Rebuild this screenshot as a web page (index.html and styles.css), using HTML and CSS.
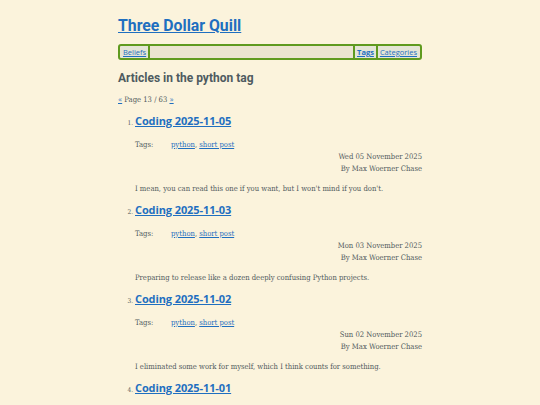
FILE: index.html
```html
<!DOCTYPE html>
<html>
<head>
<meta charset="utf-8">
<link rel="stylesheet" href="styles.css">
</head>
<body>
<div class="page">
  <header class="site-header">
    <h1 class="site-title"><a href="#">Three Dollar Quill</a></h1>
    <nav class="nav">
      <a class="nav-item" href="#">Beliefs</a>
      <span class="nav-spacer"></span>
      <a class="nav-item current" href="#">Tags</a>
      <a class="nav-item" href="#">Categories</a>
    </nav>
  </header>
  <main>
    <h2 class="section-title">Articles in the python tag</h2>
    <p class="pager"><a href="#">«</a> Page 13 / 63 <a href="#">»</a></p>
    <ol class="articles" start="1">
      <li class="article">
        <h3 class="article-title"><a href="#">Coding 2025-11-05</a></h3>
        <div class="tags"><span class="tags-label">Tags:</span><span><a href="#">python</a>, <a href="#">short post</a></span></div>
        <div class="meta"><div>Wed 05 November 2025</div><div>By Max Woerner Chase</div></div>
        <p class="summary">I mean, you can read this one if you want, but I won't mind if you don't.</p>
      </li>
      <li class="article">
        <h3 class="article-title"><a href="#">Coding 2025-11-03</a></h3>
        <div class="tags"><span class="tags-label">Tags:</span><span><a href="#">python</a>, <a href="#">short post</a></span></div>
        <div class="meta"><div>Mon 03 November 2025</div><div>By Max Woerner Chase</div></div>
        <p class="summary">Preparing to release like a dozen deeply confusing Python projects.</p>
      </li>
      <li class="article">
        <h3 class="article-title"><a href="#">Coding 2025-11-02</a></h3>
        <div class="tags"><span class="tags-label">Tags:</span><span><a href="#">python</a>, <a href="#">short post</a></span></div>
        <div class="meta"><div>Sun 02 November 2025</div><div>By Max Woerner Chase</div></div>
        <p class="summary">I eliminated some work for myself, which I think counts for something.</p>
      </li>
      <li class="article">
        <h3 class="article-title"><a href="#">Coding 2025-11-01</a></h3>
        <div class="tags"><span class="tags-label">Tags:</span><span><a href="#">python</a>, <a href="#">short post</a></span></div>
        <div class="meta"><div>Sat 01 November 2025</div><div>By Max Woerner Chase</div></div>
        <p class="summary">Another one.</p>
      </li>
    </ol>
  </main>
</div>
</body>
</html>
```
FILE: styles.css
```css
html, body {
  margin: 0;
  padding: 0;
  background: #fbf3dc;
}
body {
  font-family: "DejaVu Serif Condensed", "DejaVu Serif", serif;
  font-stretch: condensed;
  color: #505a5c;
  font-size: 7.6px;
}
a {
  color: #1f6fc0;
}
.page {
  width: 304px;
  margin-left: 118px;
}
.site-header {
  padding-top: 14px;
}
.site-title {
  margin: 0;
  font-family: Roboto, sans-serif;
  font-stretch: normal;
  font-weight: 700;
  font-size: 15.8px;
  line-height: 24px;
}
.site-title a {
  color: #1f6fc0;
}
.nav {
  margin-top: 6px;
  display: flex;
  border: 2px solid #5f9a1f;
  border-radius: 3px;
  background: #ebe4d0;
  font-family: "Open Sans", sans-serif;
  font-stretch: normal;
  font-size: 7.5px;
  line-height: 12px;
  padding: 0 1px;
}
.nav-item {
  padding: 0 2px;
  background: #e4e5d6;
  border-right: 2px solid #5f9a1f;
}
.nav-item:last-child {
  border-right: none;
}
.nav-spacer {
  flex: 1;
  border-right: 2px solid #5f9a1f;
}
.nav-item.current {
  font-weight: 700;
}
.section-title {
  margin: 9px 0 0;
  font-family: Roboto, sans-serif;
  font-stretch: normal;
  font-weight: 700;
  font-size: 12px;
  line-height: 18px;
  color: #4e5b60;
}
.pager {
  margin: 7px 0 0;
  line-height: 12px;
}
.articles {
  margin: 6px 0 0;
  padding-left: 17px;
}
.article {
  font-size: 6.5px;
  height: 89px;
}
.article-title {
  margin: 0;
  font-family: "Open Sans", sans-serif;
  font-stretch: normal;
  font-weight: 700;
  font-size: 11px;
  letter-spacing: -0.1px;
  line-height: 18px;
  display: inline-block;
  vertical-align: baseline;
}
.tags {
  margin-top: 9px;
  display: flex;
  font-size: 7.6px;
  line-height: 12px;
}
.tags-label {
  width: 36px;
}
.meta {
  text-align: right;
  font-size: 7.6px;
  line-height: 12px;
}
.summary {
  margin: 8px 0 0;
  font-size: 7.6px;
  line-height: 12px;
}
```
